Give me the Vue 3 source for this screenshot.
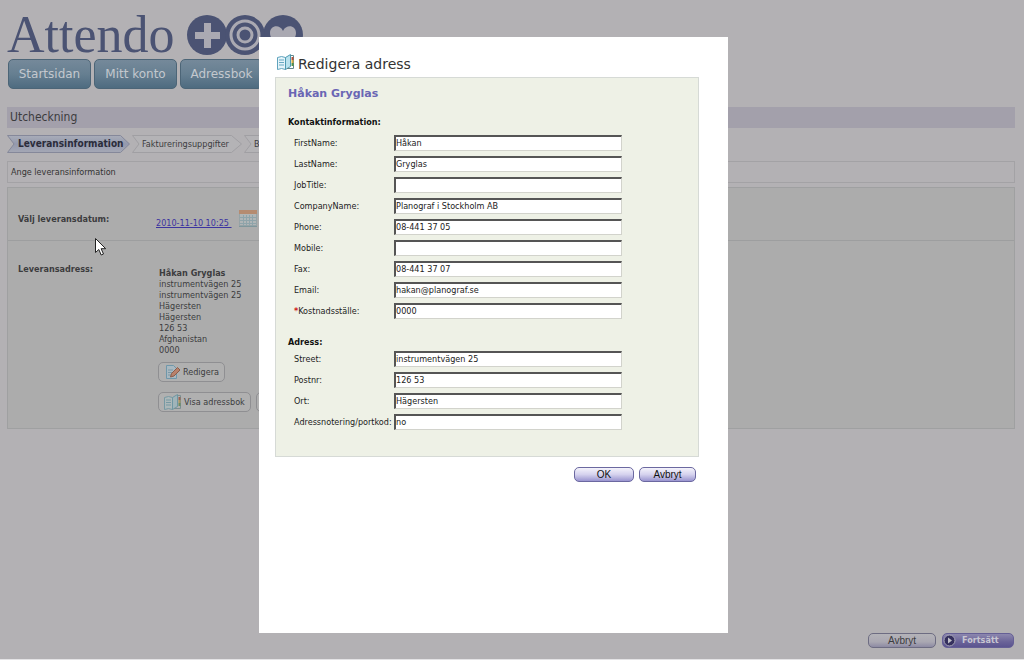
<script setup>
import { ref } from 'vue'

const nav = ['Startsidan', 'Mitt konto', 'Adressbok']
const addressLines = ['instrumentvägen 25', 'instrumentvägen 25', 'Hägersten', 'Hägersten', '126 53', 'Afghanistan', '0000']

const contact = ref([
  { id: 'first', label: 'FirstName:', value: 'Håkan' },
  { id: 'last', label: 'LastName:', value: 'Gryglas' },
  { id: 'job', label: 'JobTitle:', value: '' },
  { id: 'company', label: 'CompanyName:', value: 'Planograf i Stockholm AB' },
  { id: 'phone', label: 'Phone:', value: '08-441 37 05' },
  { id: 'mobile', label: 'Mobile:', value: '' },
  { id: 'fax', label: 'Fax:', value: '08-441 37 07' },
  { id: 'email', label: 'Email:', value: 'hakan@planograf.se' },
  { id: 'cost', label: 'Kostnadsställe:', value: '0000', required: true },
])

const address = ref([
  { id: 'street', label: 'Street:', value: 'instrumentvägen 25' },
  { id: 'zip', label: 'Postnr:', value: '126 53' },
  { id: 'city', label: 'Ort:', value: 'Hägersten' },
  { id: 'note', label: 'Adressnotering/portkod:', value: 'no' },
])
</script>

<template>
  <div class="page">
    <header class="brand">
      <span class="brand-name">Attendo</span>
      <svg class="brand-marks" width="118" height="42" viewBox="0 0 118 42" aria-hidden="true">
        <circle cx="20" cy="21" r="20" fill="#4b5373" />
        <path d="M17 9h7v9h9v7h-9v9h-7v-9H8v-7h9z" fill="#aaa9b2" />
        <circle cx="96" cy="21" r="20" fill="#4b5373" />
        <path d="M96 35C87 29 83 24 83 19c0-8 10-9 13-2 3-7 13-6 13 2 0 5-4 10-13 16z" fill="#aaa9b2" />
        <circle cx="58" cy="21" r="20" fill="#4b5373" />
        <circle cx="58" cy="21" r="14" fill="none" stroke="#aaa9b2" stroke-width="3" />
        <circle cx="58" cy="21" r="7" fill="none" stroke="#aaa9b2" stroke-width="3" />
      </svg>
    </header>

    <nav class="nav">
      <a v-for="item in nav" :key="item" href="#">{{ item }}</a>
    </nav>

    <h1 class="title">Utcheckning</h1>

    <ol class="steps">
      <li class="step first">
        <svg width="123" height="18" viewBox="0 0 123 18" aria-hidden="true">
          <defs>
            <linearGradient id="stepFill" x1="0" y1="0" x2="0" y2="1">
              <stop offset="0" stop-color="#a9adb9" />
              <stop offset=".5" stop-color="#9499ad" />
              <stop offset="1" stop-color="#a5a8b5" />
            </linearGradient>
          </defs>
          <path d="M.5.5h113l9 8.500-9 8.500H.5L7 9z" fill="url(#stepFill)" stroke="#85889a" />
        </svg>
        <span>Leveransinformation</span>
      </li>
      <li v-for="step in ['Faktureringsuppgifter', 'B']" :key="step" class="step">
        <svg width="110" height="18" viewBox="0 0 110 18" aria-hidden="true">
          <path d="M.5.5h99l10 8.500-10 8.500H.5L7 9z" fill="#b4b3b6" stroke="#a09fa3" />
        </svg>
        <span>{{ step }}</span>
      </li>
    </ol>

    <p class="hint">Ange leveransinformation</p>

    <main class="delivery">
      <section class="row date-row">
        <h2>Välj leveransdatum:</h2>
        <div class="date">
          <a href="#">2010-11-10 10:25&nbsp;</a>
          <svg width="18" height="17" viewBox="0 0 18 17" aria-hidden="true">
            <rect x=".5" y=".5" width="17" height="15" fill="#b0b5b6" stroke="#96a3a6" />
            <rect x="0" y="0" width="18" height="4" fill="#b58b70" />
            <path d="M1 7.500h16M1 10.500h16M1 13.500h16M4.500 5v11M7.500 5v11M10.500 5v11M13.500 5v11" stroke="#8fa4aa" />
            <path d="M0 16.500h18" stroke="#7f979c" />
          </svg>
        </div>
      </section>
      <section class="row address-row">
        <h2>Leveransadress:</h2>
        <div class="recipient">
          <address>
            <strong>Håkan Gryglas</strong>
            <span v-for="(line, i) in addressLines" :key="i">{{ line }}</span>
          </address>
          <button type="button" class="ghost">
            <svg width="17" height="16" viewBox="0 0 17 16" aria-hidden="true">
              <path d="M2.500 1.500h7l3 3v10h-10z" fill="#a9b8c0" stroke="#6f97aa" />
              <path d="M4 6h5M4 8.500h4M4 11h3" stroke="#7b98a6" />
              <path d="M6.500 13l1-3.500 6-6 2.500 2.500-6 6z" fill="#b8816b" stroke="#8b5c4a" />
            </svg>
            Redigera
          </button>
          <div class="button-row">
            <button type="button" class="ghost">
              <svg width="18" height="17" viewBox="0 0 18 17" aria-hidden="true">
                <path d="M.5 3.500l4-1 4 1v12l-4-1-4 1z" fill="#adb8b9" stroke="#7799a3" />
                <path d="M8.500 3.500l5-3v12l-5 3z" fill="#a0b4b9" stroke="#6f97a3" />
                <path d="M2 6h5M2 8.500h5M2 11h5" stroke="#7799a3" />
                <path d="M13.500 1.500h3v13H10" fill="none" stroke="#7b8f91" />
                <path d="M15.500 3v3" stroke="#9a6252" stroke-width="2" />
                <path d="M15.500 6v3" stroke="#ab9660" stroke-width="2" />
                <path d="M15.500 9v3" stroke="#6d8c61" stroke-width="2" />
              </svg>
              Visa adressbok
            </button>
            <button type="button" class="ghost covered" aria-label="Ny adress"></button>
          </div>
        </div>
      </section>
    </main>

    <footer class="actions">
      <button type="button" class="dim">Avbryt</button>
      <button type="button" class="dim next">
        <svg width="13" height="13" viewBox="0 0 13 13" aria-hidden="true">
          <circle cx="6.500" cy="6.500" r="5.500" fill="#35305e" stroke="#aaa8ba" />
          <path d="M5 3.500l4 3-4 3z" fill="#c0bfc8" />
        </svg>
        Fortsätt
      </button>
    </footer>

    <svg class="pointer" width="12" height="19" viewBox="0 0 12 19" aria-hidden="true">
      <path d="M.5.500v14l3.300-3 2.400 5.500 2.300-1-2.400-5.300h4.600z" fill="#fff" stroke="#222" />
    </svg>

    <div class="overlay">
      <form class="dialog" role="dialog" aria-labelledby="dialog-title" @submit.prevent>
        <h2 id="dialog-title" class="dialog-title">
          <svg width="18" height="17" viewBox="0 0 18 17" aria-hidden="true">
            <path d="M.5 3.500l4-1 4 1v12l-4-1-4 1z" fill="#e4f4fa" stroke="#5fa3bd" />
            <path d="M8.500 3.500l5-3v12l-5 3z" fill="#b9e2ee" stroke="#4e9ab2" />
            <path d="M2 6h5M2 8.500h5M2 11h5" stroke="#69a9c2" />
            <path d="M13.500 1.500h3v13H10" fill="none" stroke="#62878b" />
            <path d="M15.500 3v3" stroke="#b64f38" stroke-width="2" />
            <path d="M15.500 6v3" stroke="#d9ad43" stroke-width="2" />
            <path d="M15.500 9v3" stroke="#549348" stroke-width="2" />
          </svg>
          Redigera adress
        </h2>
        <div class="panel">
          <h3>Håkan Gryglas</h3>
          <fieldset>
            <legend>Kontaktinformation:</legend>
            <div v-for="f in contact" :key="f.id" class="field">
              <label :for="f.id"><b v-if="f.required">*</b>{{ f.label }}</label>
              <input :id="f.id" v-model="f.value" type="text" />
            </div>
          </fieldset>
          <fieldset>
            <legend>Adress:</legend>
            <div v-for="f in address" :key="f.id" class="field">
              <label :for="f.id">{{ f.label }}</label>
              <input :id="f.id" v-model="f.value" type="text" />
            </div>
          </fieldset>
        </div>
        <div class="dialog-actions">
          <button type="submit" class="pill">OK</button>
          <button type="button" class="pill">Avbryt</button>
        </div>
      </form>
    </div>
  </div>
</template>

<style>
body {
  background: #b3b1b4;
}
</style>

<style scoped>
* {
  box-sizing: border-box;
}
.page {
  position: relative;
  display: flex;
  flex-direction: column;
  min-height: 100vh;
  padding: 12px 9px 11px 7px;
  border-bottom: 1px solid #e4e3e5;
  background: #b3b1b4;
  color: #3c3c3e;
  font: 9px/12px "DejaVu Sans Condensed", "DejaVu Sans", sans-serif;
}
h1, h2, h3, p, ol {
  margin: 0;
  padding: 0;
}
button {
  margin: 0;
  font-family: inherit;
  cursor: pointer;
}
.brand {
  display: flex;
  gap: 12px;
  height: 47px;
}
.brand-name {
  color: #4b5373;
  font: 52px/46px "Liberation Serif", serif;
}
.brand-marks {
  margin-top: 2px;
}
.nav {
  display: flex;
  gap: 3px;
  padding-left: 1px;
}
.nav a {
  width: 83px;
  border: 1px solid #4c6577;
  border-radius: 5px;
  background: linear-gradient(#75899a, #667f91 50%, #4e6b80);
  color: #c3c8ce;
  font: 12px/28px "DejaVu Sans", sans-serif;
  text-align: center;
  text-decoration: none;
}
.title {
  margin-top: 18px;
  padding-left: 3px;
  background: #a3a0ab;
  font-size: 12px;
  font-weight: normal;
  line-height: 21px;
}
.steps {
  display: flex;
  gap: 2px;
  margin-top: 7px;
  list-style: none;
}
.step {
  display: grid;
  align-items: center;
}
.step > * {
  grid-area: 1 / 1;
}
.step span {
  padding-left: 10px;
}
.step.first span {
  padding-left: 11px;
  color: #2b2c3a;
  font-size: 10px;
  font-weight: bold;
}
.hint {
  margin-top: 8px;
  padding: 4px 3px;
  border: 1px solid #a3a2a5;
  color: #333;
}
.delivery {
  margin-top: 4px;
  border: 1px solid #9fa0a1;
  background: #acacac;
}
.row {
  display: grid;
  grid-template-columns: 138px 1fr;
  padding-left: 10px;
}
.row h2 {
  margin-top: 3px;
  font-size: 9px;
  line-height: 12px;
}
.date-row {
  padding-top: 22px;
  padding-bottom: 11px;
  border-bottom: 1px solid #9d9e9f;
}
.date {
  display: flex;
  align-items: flex-start;
  gap: 7px;
}
.date a {
  margin-top: 7px;
  color: #3c34a0;
}
.address-row {
  padding-top: 19px;
  padding-bottom: 16px;
}
.recipient {
  padding-left: 2px;
}
address {
  display: flex;
  flex-direction: column;
  margin: 8px 0 6px;
  padding-left: 1px;
  font-style: normal;
  line-height: 11px;
}
.ghost {
  display: flex;
  align-items: center;
  gap: 2px;
  height: 20px;
  padding: 0 5px;
  border: 1px solid #8f8f92;
  border-radius: 5px;
  background: #b0b0b0;
  color: #3c3c3e;
  font-size: 9px;
}
.covered {
  width: 60px;
}
.button-row {
  display: flex;
  gap: 5px;
  margin-top: 10px;
}
.actions {
  display: flex;
  justify-content: flex-end;
  gap: 6px;
  margin-top: auto;
  padding-right: 1px;
}
.dim {
  width: 68px;
  height: 15px;
  padding: 0;
  border: 1px solid #6d6c82;
  border-radius: 5px;
  background: linear-gradient(#b4b3b8, #aaa8b2 60%, #8d8aa3);
  color: #3c3c40;
  font: 10px/13px "Liberation Sans", sans-serif;
}
.dim.next {
  display: flex;
  align-items: center;
  gap: 6px;
  width: 72px;
  border-color: #655f96;
  background: linear-gradient(#8c87ae, #6a6398 60%, #5b5490);
  color: #c8c6d2;
  font: bold 9px/13px "DejaVu Sans Condensed", sans-serif;
}
.pointer {
  position: absolute;
  left: 95px;
  top: 238px;
}
.overlay {
  position: absolute;
  inset: 0;
  display: flex;
  align-items: flex-start;
  justify-content: center;
  padding: 37px 37px 26px 0;
}
.dialog {
  width: 469px;
  max-width: 100%;
  min-height: 100%;
  padding: 17px 29px 16px 16px;
  background: #fff;
  color: #222;
}
.dialog-title {
  display: flex;
  align-items: flex-start;
  gap: 3px;
  height: 23px;
  padding-left: 2px;
  color: #333;
  font: 14px/20px "DejaVu Sans", sans-serif;
}
.dialog-title svg {
  flex: none;
}
.panel {
  padding: 9px 12px 24px;
  border: 1px solid #d6dad6;
  background: #eef1e6;
}
.panel h3 {
  color: #6a66b4;
  font: bold 11px/14px "DejaVu Sans", sans-serif;
}
fieldset {
  min-width: 0;
  margin: 16px 0 0;
  padding: 0;
  border: 0;
}
legend {
  padding: 0 0 4px;
  color: #111;
  font-weight: bold;
  line-height: 11px;
}
fieldset + fieldset legend {
  padding: 0;
}
.field {
  display: grid;
  grid-template-columns: 100px minmax(0, 228px);
  align-items: center;
  height: 21px;
  padding-left: 6px;
}
.field label {
  white-space: nowrap;
}
.field b {
  color: #d01818;
}
.field input {
  width: 100%;
  height: 16px;
  padding: 0;
  border: 1px solid #d2d3cc;
  border-top: 2px solid #555;
  border-left: 2px solid #555;
  border-radius: 0;
  background: #fff;
  color: #222;
  font: inherit;
}
.dialog-actions {
  display: flex;
  justify-content: flex-end;
  gap: 5px;
  padding: 10px 3px 0 0;
}
.pill {
  width: 57px;
  height: 15px;
  padding: 0;
  border: 1px solid #6b68a0;
  border-radius: 5px;
  background: linear-gradient(#f4f3fb, #d5d2ee 50%, #9a95d0);
  color: #111;
  font: 10px/13px "Liberation Sans", sans-serif;
}
.pill:first-child {
  width: 60px;
}
</style>
